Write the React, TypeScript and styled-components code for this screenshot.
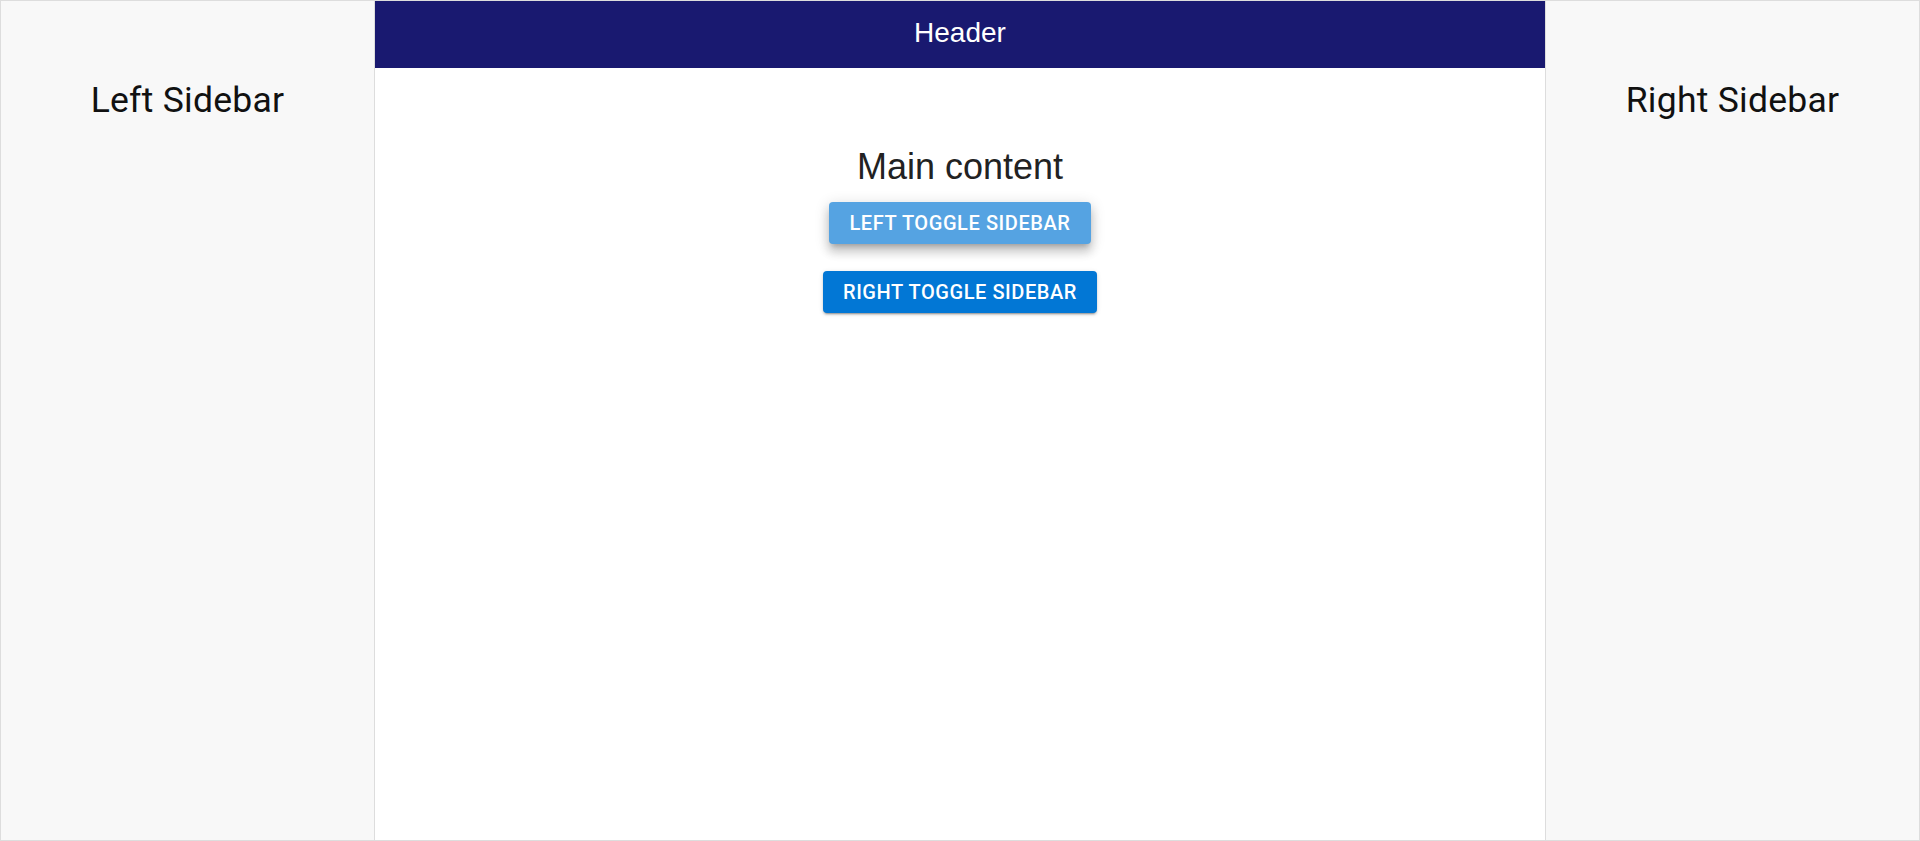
import React, { useState } from "react";
import styled, { createGlobalStyle } from "styled-components";

const GlobalStyle = createGlobalStyle`
  html, body {
    margin: 0;
    padding: 0;
    background: #ffffff;
  }
  * {
    box-sizing: border-box;
  }
`;

const Layout = styled.div`
  display: flex;
  height: 100vh;
  border: 1px solid #dddddd;
  background: #ffffff;
`;

const Sidebar = styled.aside<{ side: "left" | "right" }>`
  width: 374px;
  flex-shrink: 0;
  background: #f8f8f8;
  ${({ side }) =>
    side === "left" ? "border-right: 1px solid #dddddd;" : "border-left: 1px solid #dddddd;"}
  padding-top: 78px;
  text-align: center;
`;

const SidebarTitle = styled.h4`
  margin: 0;
  font-family: Roboto, "Helvetica Neue", Arial, sans-serif;
  font-weight: 400;
  font-size: 35.5px;
  line-height: 1.235;
  letter-spacing: 0.00735em;
  color: #111111;
`;

const Center = styled.div`
  flex: 1;
  display: flex;
  flex-direction: column;
  min-width: 0;
`;

const Header = styled.header`
  height: 67px;
  flex-shrink: 0;
  background: #191970;
  color: #ffffff;
  display: flex;
  align-items: center;
  justify-content: center;
  font-family: "Liberation Sans", Arial, sans-serif;
  font-size: 28px;
  padding-bottom: 4px;
`;

const Main = styled.main`
  flex: 1;
  display: flex;
  flex-direction: column;
  align-items: center;
  padding-top: 78px;
`;

const MainTitle = styled.h2`
  margin: 0 0 14px;
  font-family: "Liberation Sans", Arial, sans-serif;
  font-weight: 400;
  font-size: 36px;
  color: #222222;
`;

const ToggleButton = styled.button<{ raised?: boolean }>`
  height: 42px;
  padding: 0 20px;
  margin-bottom: 27px;
  border: none;
  border-radius: 4px;
  font-family: Roboto, "Helvetica Neue", Arial, sans-serif;
  font-weight: 500;
  font-size: 20px;
  letter-spacing: 0.02857em;
  text-transform: uppercase;
  color: #ffffff;
  cursor: pointer;
  background: ${({ raised }) => (raised ? "#55a3e2" : "#0277d5")};
  box-shadow: ${({ raised }) =>
    raised
      ? "0px 5px 5px -3px rgba(0,0,0,0.2), 0px 8px 10px 1px rgba(0,0,0,0.14), 0px 3px 14px 2px rgba(0,0,0,0.12)"
      : "0px 3px 1px -2px rgba(0,0,0,0.2), 0px 2px 2px 0px rgba(0,0,0,0.14), 0px 1px 5px 0px rgba(0,0,0,0.12)"};
`;

function App() {
  const [leftOpen, setLeftOpen] = useState(true);
  const [rightOpen, setRightOpen] = useState(true);

  return (
    <>
      <GlobalStyle />
      <Layout>
        {leftOpen && (
          <Sidebar side="left">
            <SidebarTitle>Left Sidebar</SidebarTitle>
          </Sidebar>
        )}
        <Center>
          <Header>Header</Header>
          <Main>
            <MainTitle>Main content</MainTitle>
            <ToggleButton raised onClick={() => setLeftOpen(!leftOpen)}>
              Left Toggle Sidebar
            </ToggleButton>
            <ToggleButton onClick={() => setRightOpen(!rightOpen)}>
              Right Toggle Sidebar
            </ToggleButton>
          </Main>
        </Center>
        {rightOpen && (
          <Sidebar side="right">
            <SidebarTitle>Right Sidebar</SidebarTitle>
          </Sidebar>
        )}
      </Layout>
    </>
  );
}

export default App;
